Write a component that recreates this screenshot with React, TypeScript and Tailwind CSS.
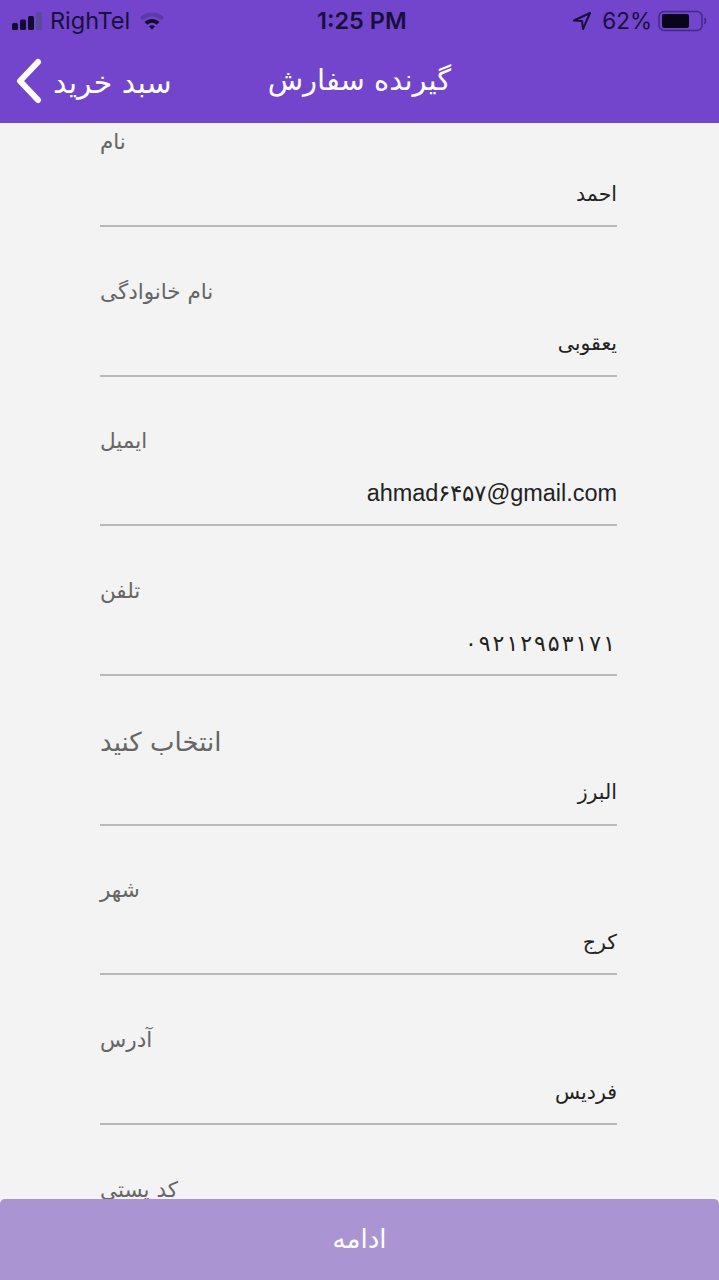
const fields = [
    { label: 'نام', value: 'احمد' },
    { label: 'نام خانوادگی', value: 'یعقوبی' },
    { label: 'ایمیل', value: 'ahmad۶۴۵۷@gmail.com', ltr: true },
    { label: 'تلفن', value: '۰۹۲۱۲۹۵۳۱۷۱', spaced: true },
    { label: 'انتخاب کنید', value: 'البرز', big: true },
    { label: 'شهر', value: 'کرج' },
    { label: 'آدرس', value: 'فردیس' },
    { label: 'کد پستی', value: '' },
];

function StatusBar() {
    return (
        <div className="h-[41px] flex items-center justify-between pl-[12px] pr-[11px] text-[#17103a] text-[24px] font-['Inter',sans-serif]">
            <div className="flex items-center w-[240px]">
                <svg width="32" height="20" viewBox="0 0 32 20" fill="#120b30">
                    <rect x="0" y="12" width="6" height="7" rx="1.5" />
                    <rect x="8" y="8.5" width="6" height="10.5" rx="1.5" />
                    <rect x="16" y="5" width="6" height="14" rx="1.5" />
                    <rect x="24" y="1" width="6" height="18" rx="1.5" fill="#5a4a9a" />
                </svg>
                <span className="ml-[6px] text-[23.5px]">RighTel</span>
                <svg className="ml-[9px]" width="26" height="19" viewBox="0 0 26 19">
                    <path d="M1 6.5 A17 17 0 0 1 25 6.5 L22.3 9.3 A13.2 13.2 0 0 0 3.7 9.3 Z" fill="#5a3aa8" />
                    <path d="M5.5 11 A10.6 10.6 0 0 1 20.5 11 L17.7 13.8 A6.6 6.6 0 0 0 8.3 13.8 Z" fill="#120b30" />
                    <path d="M10 15.5 A4.2 4.2 0 0 1 16 15.5 L13 18.5 Z" fill="#120b30" />
                </svg>
            </div>
            <div className="font-semibold text-[23.5px] absolute left-[317px]">1:25 PM</div>
            <div className="flex items-center">
                <svg width="20" height="20" viewBox="0 0 20 20" fill="none" stroke="#17103a" strokeWidth="2" strokeLinejoin="round">
                    <path d="M18 2 L2 9.5 L10 10 L11 18 Z" />
                </svg>
                <span className="ml-[10px] text-[22.5px]">62%</span>
                <svg className="ml-[6px]" width="50" height="24" viewBox="0 0 50 24">
                    <rect x="1" y="2.5" width="43" height="19" rx="5" fill="none" stroke="#3f2a86" strokeWidth="1.5" />
                    <rect x="4" y="5" width="27" height="14" rx="2" fill="#08051a" />
                    <path d="M46.5 9 Q48.5 12 46.5 15" fill="none" stroke="#3f2a86" strokeWidth="1.5" />
                </svg>
            </div>
        </div>
    );
}

function Field({ label, value, ltr, spaced, big }: { label: string; value: string; ltr?: boolean; spaced?: boolean; big?: boolean }) {
    return (
        <div className="h-[149.7px] shrink-0">
            <div dir="rtl" className={`h-[38px] flex items-center justify-end text-[#666666] ${big ? 'text-[26px] pt-[3px]' : 'text-[21.5px]'}`}>
                {label}
            </div>
            {spaced ? (
                // letter-spacing is ignored on Persian digits, so each digit gets its own box
                <div dir="ltr" className="h-[64px] pt-[2px] pr-[2px] flex items-center justify-end gap-[2px] text-[#222222] text-[22px]">
                    {Array.from(value).map((d, i) => (
                        <span key={i}>{d}</span>
                    ))}
                </div>
            ) : (
                <div
                    dir={ltr ? 'ltr' : 'rtl'}
                    className={`h-[64px] pt-[2px] flex items-center text-[#222222] ${ltr ? "justify-end text-[23.45px] font-['Liberation_Sans',sans-serif]" : 'justify-start text-[20.5px]'}`}
                >
                    {value}
                </div>
            )}
            <div className="h-[2px] bg-[#b9b9b9]" />
        </div>
    );
}

export default function App() {
    return (
        <div className="w-[719px] h-[1280px] flex flex-col overflow-hidden bg-[#f3f3f3] font-['DejaVu_Sans',sans-serif]">
            <header className="h-[123px] shrink-0 bg-[#7345cd] relative">
                <StatusBar />
                <div className="h-[82px] flex items-center text-white relative">
                    <svg className="ml-[15px] mt-[-3px] shrink-0" width="28" height="46" viewBox="0 0 28 46" fill="none" stroke="currentColor" strokeWidth="6" strokeLinecap="round" strokeLinejoin="round">
                        <path d="M23 4 L5 23 L23 42" />
                    </svg>
                    <span dir="rtl" className="ml-[10px] text-[30px] whitespace-nowrap">سبد خرید</span>
                    <span dir="rtl" className="ml-[96px] mt-[-3px] text-[29px] whitespace-nowrap">گیرنده سفارش</span>
                </div>
            </header>

            <main className="flex-1 min-h-0 overflow-hidden px-[102px] ml-[-2px]">
                {fields.map((f) => (
                    <Field key={f.label} {...f} />
                ))}
            </main>

            <button className="h-[81px] shrink-0 bg-[#aa94d2] rounded-t-[5px] text-white text-[26px]">
                ادامه
            </button>
        </div>
    );
}
